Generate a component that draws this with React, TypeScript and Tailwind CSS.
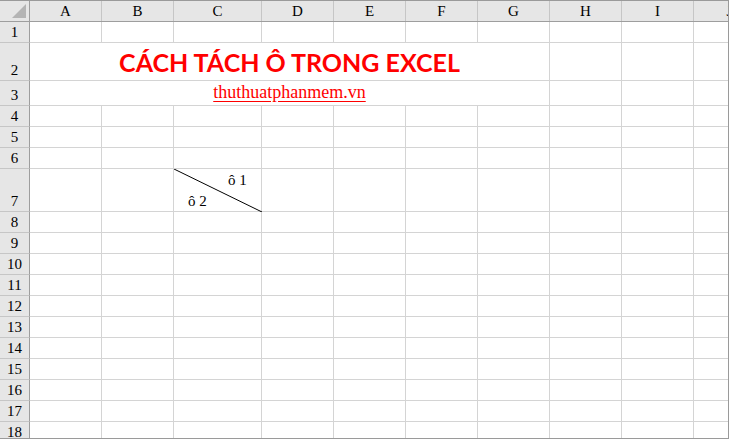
import React from "react";

const cols = [
    { name: "A", w: 72 },
    { name: "B", w: 72 },
    { name: "C", w: 88 },
    { name: "D", w: 72 },
    { name: "E", w: 72 },
    { name: "F", w: 72 },
    { name: "G", w: 72 },
    { name: "H", w: 72 },
    { name: "I", w: 72 },
    { name: "J", w: 72 },
];

// row heights include the 1px bottom grid line
const rows = [21, 38, 25, 21, 21, 21, 43, 21, 21, 21, 21, 21, 21, 21, 21, 21, 21, 21];

const serif = "font-['Liberation_Serif','Times_New_Roman',serif]";

const ColHeader = ({ name, w }: { name: string; w: number }) => (
    <div
        className={`shrink-0 h-full flex items-center justify-center border-r border-[#c6c6c6] text-[15px] text-black ${serif}`}
        style={{ width: w }}
    >
        {name}
    </div>
);

const DiagonalCell = () => (
    <div className="relative w-full h-full">
        <svg className="absolute inset-0" width="88" height="43" viewBox="0 0 88 43">
            <line x1="0" y1="0" x2="88" y2="43" stroke="#000" strokeWidth="1" />
        </svg>
        <span className={`absolute left-[54px] top-[2px] text-[15px] leading-[18px] ${serif}`}>ô 1</span>
        <span className={`absolute left-[14px] top-[23px] text-[15px] leading-[18px] ${serif}`}>ô 2</span>
    </div>
);

export default function App() {
    return (
        <div className="w-[729px] h-[439px] overflow-hidden bg-white border-r border-b border-t border-[#9a9a9a] flex flex-col">
            {/* column headers */}
            <div className="flex shrink-0 h-[21px] bg-[#e6e6e6] border-b border-[#9e9e9e]">
                <div className="relative shrink-0 w-[30px] h-full border-r border-[#9e9e9e]">
                    <div className="absolute right-[3px] bottom-[3px] w-0 h-0 border-l-[14px] border-l-transparent border-b-[14px] border-b-[#b4b4b4]" />
                </div>
                {cols.map((c) => (
                    <ColHeader key={c.name} name={c.name} w={c.w} />
                ))}
            </div>

            {rows.map((h, i) => {
                const r = i + 1;
                return (
                    <div key={r} className="flex shrink-0" style={{ height: h }}>
                        <div
                            className={`shrink-0 w-[30px] h-full bg-[#e6e6e6] border-r border-b border-r-[#9e9e9e] border-b-[#c6c6c6] flex items-end justify-center pb-[1px] text-[15px] leading-[17px] text-black ${serif}`}
                        >
                            {r}
                        </div>
                        {r === 2 ? (
                            <>
                                <div className="shrink-0 w-[520px] h-full border-r border-b border-[#d4d4d4] flex items-end justify-center pb-[4px]">
                                    <span className="font-['Lato',sans-serif] font-bold text-[25px] leading-[28px] text-[#ff0000]">
                                        CÁCH TÁCH Ô TRONG EXCEL
                                    </span>
                                </div>
                                {cols.slice(7).map((c) => (
                                    <div key={c.name} className="shrink-0 h-full border-r border-b border-[#d4d4d4]" style={{ width: c.w }} />
                                ))}
                            </>
                        ) : r === 3 ? (
                            <>
                                <div className="shrink-0 w-[520px] h-full border-r border-b border-[#d4d4d4] flex items-end justify-center pb-[3px]">
                                    <span className={`${serif} text-[18px] leading-[20px] text-[#ff0000] underline underline-offset-[3px]`}>
                                        thuthuatphanmem.vn
                                    </span>
                                </div>
                                {cols.slice(7).map((c) => (
                                    <div key={c.name} className="shrink-0 h-full border-r border-b border-[#d4d4d4]" style={{ width: c.w }} />
                                ))}
                            </>
                        ) : (
                            cols.map((c) => (
                                <div key={c.name} className="shrink-0 h-full border-r border-b border-[#d4d4d4]" style={{ width: c.w }}>
                                    {r === 7 && c.name === "C" ? <DiagonalCell /> : null}
                                </div>
                            ))
                        )}
                    </div>
                );
            })}
        </div>
    );
}
